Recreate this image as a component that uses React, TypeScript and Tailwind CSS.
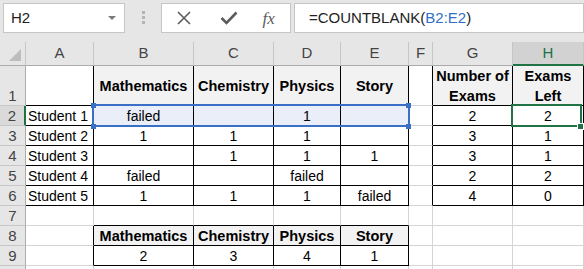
import React from "react";

const colW = [26, 68, 100, 80, 67, 68, 24, 80, 71];
const letters = ["A", "B", "C", "D", "E", "F", "G", "H"];

const data: string[][] = [
  ["", "Mathematics", "Chemistry", "Physics", "Story", "", "Number of\nExams", "Exams\nLeft"],
  ["Student 1", "failed", "", "1", "", "", "2", "2"],
  ["Student 2", "1", "1", "1", "", "", "3", "1"],
  ["Student 3", "", "1", "1", "1", "", "3", "1"],
  ["Student 4", "failed", "", "failed", "", "", "2", "2"],
  ["Student 5", "1", "1", "1", "failed", "", "4", "0"],
  ["", "", "", "", "", "", "", ""],
  ["", "Mathematics", "Chemistry", "Physics", "Story", "", "", ""],
  ["", "2", "3", "4", "1", "", "", ""],
  ["", "", "", "", "", "", "", ""],
];

// r: 1..10, c: 1..8 (A..H)
function inTable(r: number, c: number): boolean {
  if (c === 1 && r >= 2 && r <= 6) return true;
  if (c >= 2 && c <= 5 && r >= 1 && r <= 6) return true;
  if (c >= 7 && c <= 8 && r >= 1 && r <= 6) return true;
  if (c >= 2 && c <= 5 && r >= 8 && r <= 9) return true;
  return false;
}

function isHeader(r: number, c: number): boolean {
  if (r === 1 && ((c >= 2 && c <= 5) || c === 7 || c === 8)) return true;
  if (r === 8 && c >= 2 && c <= 5) return true;
  return false;
}

function Cell({ r, c, text }: { r: number; c: number; text: string }) {
  const blackR = inTable(r, c) || inTable(r, c + 1);
  const blackB = inTable(r, c) || inTable(r + 1, c);
  const header = isHeader(r, c);
  const sel = r === 2 && c >= 2 && c <= 5;
  const bg = header ? "bg-[#f2f2f2]" : sel ? "bg-[#e9eef8]" : "bg-white";
  const rb = blackR ? "border-r-black" : "border-r-[#d4d4d4]";
  const bb = blackB ? "border-b-black" : "border-b-[#d4d4d4]";
  const align = c === 1 ? "justify-start pl-[2px]" : "justify-center";
  const weight = header ? "font-bold text-[14.5px]" : "font-normal text-[14px]";
  return (
    <div
      className={`flex items-center ${align} ${bg} border-r border-b ${rb} ${bb} leading-[20px] text-black whitespace-pre-line text-center overflow-hidden ${weight}`}
    >
      {text}
    </div>
  );
}

export default function App() {
  const rowHeights = [24, 40, 20, 20, 20, 20, 20, 20, 20, 20, 20];
  return (
    <div
      className="w-[584px] h-[269px] overflow-hidden bg-white"
      style={{ fontFamily: '"Liberation Sans", Arial, sans-serif' }}
    >
      {/* Toolbar */}
      <div className="h-[42px] bg-[#e6e6e6] flex items-start pt-[3px]">
        <div className="ml-[3px] w-[127px] h-[30px] bg-white border border-[#c6c6c6] flex items-center justify-between pl-[7px] pr-[8px]">
          <span className="text-[15px] text-[#222]">H2</span>
          <svg width="8" height="5" viewBox="0 0 8 5">
            <polygon points="0,0 8,0 4,4" fill="#7a7a7a" />
          </svg>
        </div>
        <div className="ml-[17px] mt-[8px] flex flex-col gap-[2px]">
          <div className="w-[3px] h-[3px] bg-[#b4b4b4]" />
          <div className="w-[3px] h-[3px] bg-[#b4b4b4]" />
          <div className="w-[3px] h-[3px] bg-[#b4b4b4]" />
        </div>
        <div className="ml-[16px] w-[137px] h-[30px] bg-white border border-[#c6c6c6] flex items-center">
          <svg width="16" height="16" viewBox="0 0 16 16" className="ml-[14px]">
            <path d="M2 2 L14 14 M14 2 L2 14" stroke="#5c5c5c" strokeWidth="1.6" fill="none" />
          </svg>
          <svg width="18" height="14" viewBox="0 0 18 14" className="ml-[28px]">
            <path d="M1.5 7 L6.5 12 L16.5 1.5" stroke="#5c5c5c" strokeWidth="2.6" fill="none" />
          </svg>
          <span
            className="ml-[25px] text-[17px] italic text-[#5c5c5c] leading-none"
            style={{ fontFamily: '"Liberation Serif", "Times New Roman", serif' }}
          >
            fx
          </span>
        </div>
        <div className="ml-[3px] w-[290px] h-[30px] bg-white border border-[#c6c6c6] flex items-center pl-[14px] text-[15px] text-[#222] shrink-0">
          <span>=COUNTBLANK(</span>
          <span className="text-[#2f6fc9]">B2:E2</span>
          <span>)</span>
        </div>
      </div>

      {/* Grid */}
      <div className="relative">
        <div
          className="grid"
          style={{
            gridTemplateColumns: colW.map((w) => `${w}px`).join(" "),
            gridTemplateRows: rowHeights.map((h) => `${h}px`).join(" "),
          }}
        >
          {/* Header row */}
          <div className="relative bg-[#e6e6e6] border-r border-b border-r-[#c6c6c6] border-b-[#ababab]">
            <svg width="14" height="14" viewBox="0 0 14 14" className="absolute right-[3px] bottom-[3px]">
              <polygon points="13,1 13,13 1,13" fill="#bdbdbd" />
            </svg>
          </div>
          {letters.map((l) =>
            l === "H" ? (
              <div
                key={l}
                className="flex items-center justify-center bg-[#d2d2d2] border-r border-r-[#c6c6c6] border-b-2 border-b-[#217346] text-[15px] text-[#217346]"
              >
                {l}
              </div>
            ) : (
              <div
                key={l}
                className="flex items-center justify-center bg-[#e6e6e6] border-r border-b border-r-[#c6c6c6] border-b-[#ababab] text-[15px] text-[#444]"
              >
                {l}
              </div>
            )
          )}

          {data.map((row, ri) => {
            const r = ri + 1;
            return (
              <React.Fragment key={r}>
                {r === 2 ? (
                  <div className="flex items-end justify-center bg-[#dadada] border-r-2 border-b border-r-[#217346] border-b-[#c6c6c6] text-[15px] leading-[19px] text-[#444]">
                    {r}
                  </div>
                ) : (
                  <div className="flex items-end justify-center bg-[#e6e6e6] border-r border-b border-r-[#ababab] border-b-[#c6c6c6] text-[15px] leading-[19px] text-[#444]">
                    {r <= 9 ? r : ""}
                  </div>
                )}
                {row.map((t, ci) => (
                  <Cell key={ci} r={r} c={ci + 1} text={t} />
                ))}
              </React.Fragment>
            );
          })}
        </div>

        {/* Reference highlight B2:E2 */}
        <div className="absolute left-[92px] top-[62px] w-[318px] h-[23px] border-2 border-[#3a6fc6] pointer-events-none" />
        <div className="absolute left-[91px] top-[61px] w-[5px] h-[5px] bg-[#3a6fc6]" />
        <div className="absolute left-[406px] top-[61px] w-[5px] h-[5px] bg-[#3a6fc6]" />
        <div className="absolute left-[91px] top-[82px] w-[5px] h-[5px] bg-[#3a6fc6]" />
        <div className="absolute left-[406px] top-[82px] w-[5px] h-[5px] bg-[#3a6fc6]" />

        {/* Active cell H2 */}
        <div className="absolute left-[511px] top-[62px] w-[71px] h-[23px] border-2 border-[#217346] pointer-events-none" />
        <div className="absolute left-[577px] top-[81px] w-[7px] h-[7px] bg-[#217346] border border-white" />
      </div>
    </div>
  );
}
